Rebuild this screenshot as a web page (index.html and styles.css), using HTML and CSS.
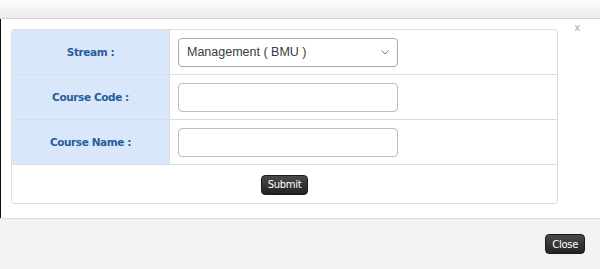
FILE: index.html
```html
<!DOCTYPE html>
<html lang="en">
<head>
    <meta charset="UTF-8">
    <title>Add Course</title>
    <link rel="stylesheet" href="styles.css">
</head>
<body>
    <div class="dialog">
        <div class="dialog-header"></div>

        <div class="dialog-body">
            <form class="course-form">
                <div class="form-row">
                    <label class="form-label" for="stream">Stream :</label>
                    <div class="form-field">
                        <div class="select-wrap">
                            <select id="stream">
                                <option>Management ( BMU )</option>
                            </select>
                            <svg class="select-arrow" width="8" height="5" viewBox="0 0 8 5" fill="none" stroke="#777" stroke-width="1">
                                <path d="M0.5 0.5 L4 4 L7.5 0.5"></path>
                            </svg>
                        </div>
                    </div>
                </div>
                <div class="form-row">
                    <label class="form-label" for="course-code">Course Code :</label>
                    <div class="form-field">
                        <input type="text" id="course-code">
                    </div>
                </div>
                <div class="form-row">
                    <label class="form-label" for="course-name">Course Name :</label>
                    <div class="form-field">
                        <input type="text" id="course-name">
                    </div>
                </div>
                <div class="form-actions">
                    <button type="button" class="btn-dark">Submit</button>
                </div>
            </form>
            <span class="close-x">x</span>
        </div>

        <div class="dialog-footer">
            <button type="button" class="btn-dark">Close</button>
        </div>
    </div>
</body>
</html>
```

FILE: styles.css
```css
/* Course dialog */

:root {
    --border: #dddddd;
    --label-bg: #d9e7fb;
    --label-text: #275d98;
    --dark-btn: #333333;
}

body {
    margin: 0;
    font-family: 'DejaVu Sans', Verdana, sans-serif;
    background: #ffffff;
}

.dialog {
    width: 600px;
    height: 269px;
    display: flex;
    flex-direction: column;
}

/* Header bar */
.dialog-header {
    height: 18px;
    background: linear-gradient(#fdfdfd, #ebebeb);
    border-bottom: 1px solid #d4d4d4;
}

/* Body */
.dialog-body {
    position: relative;
    height: 199px;
    box-sizing: border-box;
    border-left: 1px solid #111;
    padding: 10px 42px 0 10px;
}

.close-x {
    position: absolute;
    top: 2px;
    right: 20px;
    color: #aaa;
    font-size: 11px;
    font-family: 'Liberation Sans', Arial, sans-serif;
}

.course-form {
    border: 1px solid var(--border);
    border-radius: 3px;
    overflow: hidden;
}

.form-row {
    display: grid;
    grid-template-columns: 158px 1fr;
    height: 45px;
    border-bottom: 1px solid var(--border);
    box-sizing: border-box;
}

.form-label {
    display: flex;
    align-items: center;
    justify-content: center;
    background: var(--label-bg);
    border-right: 1px solid var(--border);
    color: var(--label-text);
    font-size: 10.5px;
    font-weight: 700;
    letter-spacing: -0.4px;
}

.form-field {
    display: flex;
    align-items: center;
    padding-left: 8px;
}

.select-wrap {
    position: relative;
    display: flex;
}

select, input[type="text"] {
    width: 220px;
    height: 29px;
    box-sizing: border-box;
    border: 1px solid #b5b5b5;
    border-radius: 4px;
    background: #fff;
    margin: 0;
}

select {
    appearance: none;
    -webkit-appearance: none;
    border-color: #a8a8a8;
    padding: 0 8px;
    font-family: 'Liberation Sans', Arial, sans-serif;
    font-size: 12.5px;
    color: #3a3a3a;
}

.select-arrow {
    position: absolute;
    right: 9px;
    top: 12px;
}

input[type="text"] {
    border-color: #bdbdbd;
    padding: 0 6px;
}

.form-actions {
    height: 37px;
    display: flex;
    align-items: center;
    justify-content: center;
    padding-top: 1px;
}

/* Dark buttons */
.btn-dark {
    height: 20px;
    padding: 0 6px;
    background: linear-gradient(#4a4a4a, #222);
    color: #fff;
    border: 1px solid #1a1a1a;
    border-radius: 4px;
    font-family: 'DejaVu Sans', Verdana, sans-serif;
    font-size: 10px;
    letter-spacing: -0.3px;
    cursor: pointer;
}

/* Footer */
.dialog-footer {
    flex: 1;
    display: flex;
    justify-content: flex-end;
    align-items: flex-start;
    padding: 15px 15px 0 0;
    background: #f2f2f2;
    border-top: 1px solid var(--border);
}
```
